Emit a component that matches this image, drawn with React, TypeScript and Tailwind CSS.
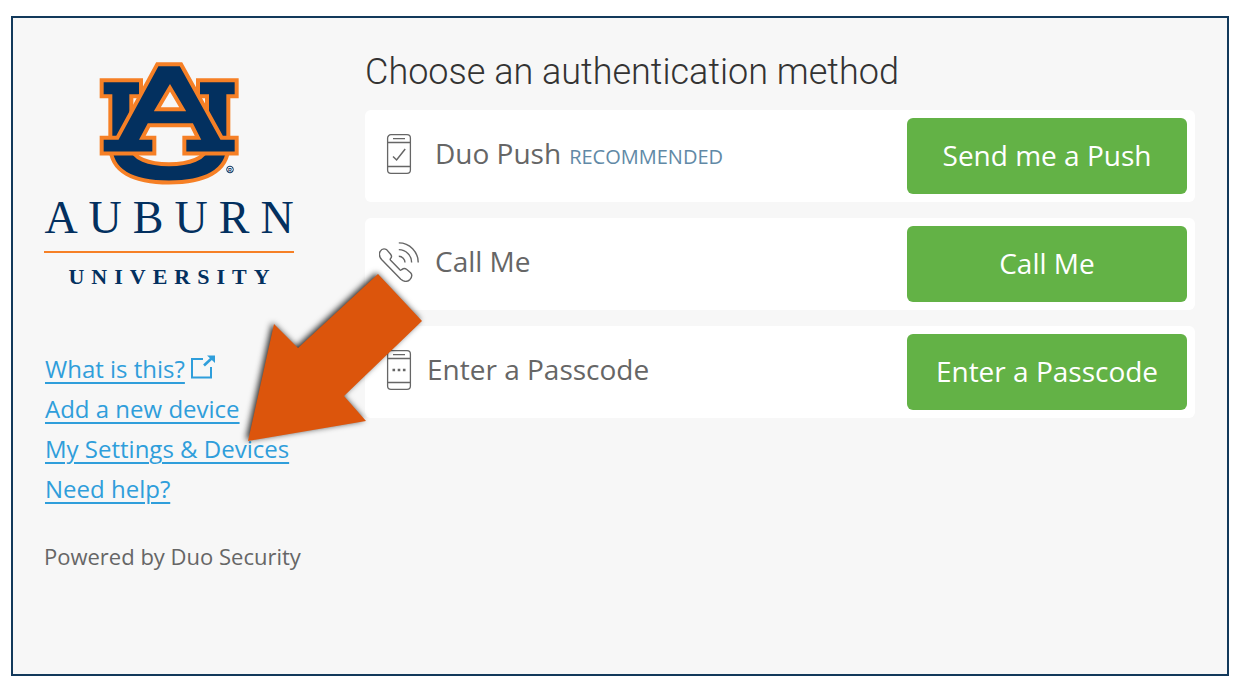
import type { ReactNode } from "react";

function AuburnMark() {
  return (
    <svg viewBox="27 20 420 368" className="h-[123px] w-[140px]" aria-hidden="true">
      <g fill="#03305f" stroke="#f68026" strokeWidth="12">
        <path d="M35 74H153V122H124V270C124 310 180 326 237 326S351 310 351 270V122H324V74H440V122H415V270C415 350 340 381 237 381S61 350 61 270V122H35Z" />
        <path
          fillRule="evenodd"
          d="M202 26H273L395 247H440V294H283V247H324L305 209H177L157 247H193V294H35V247H82ZM240 97L202 161H278Z"
        />
      </g>
      <circle cx="420" cy="342" r="10" fill="none" stroke="#03305f" strokeWidth="3" />
      <text
        x="420"
        y="348"
        textAnchor="middle"
        fill="#03305f"
        className="font-['Liberation_Sans'] text-[16px] font-bold"
      >
        R
      </text>
    </svg>
  );
}

function PhoneIcon({ children }: { children: ReactNode }) {
  return (
    <svg
      viewBox="0 0 40 40"
      className="size-10 shrink-0"
      fill="none"
      stroke="#666"
      strokeWidth="1.3"
      aria-hidden="true"
    >
      <rect x="8.6" y="0.7" width="22.8" height="38.6" rx="3.4" />
      <path d="M8.6 8.5H31.4M8.6 32.5H31.4M14 4.6H26" />
      {children}
    </svg>
  );
}

function CallIcon() {
  return (
    <svg
      viewBox="0 0 40 40"
      className="size-10 shrink-0"
      fill="none"
      stroke="#666"
      strokeWidth="1.4"
      strokeLinejoin="round"
      aria-hidden="true"
    >
      <path d="M1 9.6C2.6 7 5 6.2 7.6 7.6L11.6 12.2C13 14 12.6 15.4 11.6 16.4C11 17 11 17.6 11.6 18.3L20.6 27.6C21.4 28.5 22 28.4 22.8 27.6C24.3 26.4 26 26.2 27.5 27.3L31.6 30.8C33.6 33 32.8 35.3 31 37.4C28.4 40 25 39.8 21.8 37.3L2.8 17.8C0.2 14.9-0.2 12.3 1 9.6Z" />
      <path d="M19.8 14.3A6.2 6.2 0 0 1 26 20.6M19.8 7.6A12.8 12.8 0 0 1 32.6 20.6M19.8 0.9A19.4 19.4 0 0 1 39.2 20.6" />
    </svg>
  );
}

function ExternalIcon() {
  return (
    <svg
      viewBox="0 0 24 24"
      className="mb-1 size-6"
      fill="none"
      stroke="#2f9edb"
      strokeWidth="2"
      aria-hidden="true"
    >
      <path d="M12 4H1V22.5H20V12" />
      <path d="M13 10.5L21 3" strokeWidth="2.6" />
      <path d="M16 0.5H24V8Z" fill="#2f9edb" stroke="none" />
    </svg>
  );
}

type MethodProps = {
  icon: ReactNode;
  label: string;
  badge?: string;
  action: string;
  tight?: boolean;
};

function Method({ icon, label, badge, action, tight }: MethodProps) {
  return (
    <li className="flex items-center justify-between rounded-md bg-white p-2">
      <div
        className={
          tight ? "flex items-center gap-2 pb-1 pl-1.5" : "flex items-center gap-4 pb-1 pl-1.5"
        }
      >
        {icon}
        <h2 className="pb-0.5 text-[28px] leading-9">
          {label}
          {badge && <span className="ml-2 text-xl text-[#6189a6]">{badge}</span>}
        </h2>
      </div>
      <button
        type="button"
        className="h-[76px] w-[280px] shrink-0 rounded-md bg-[#63b246] pb-0.5 text-[28px] text-white"
      >
        {action}
      </button>
    </li>
  );
}

export default function App() {
  return (
    <div className="bg-white px-[11px] pt-4 pb-3 font-['Open_Sans',sans-serif] text-[#666]">
      <div className="relative flex min-h-[660px] items-start border-2 border-[#12395b] bg-[#f7f7f7] pr-8 pl-[31px]">
        <aside className="w-[321px] shrink-0 pt-11">
          <div className="flex w-[250px] flex-col items-center font-['Liberation_Serif',serif] text-[#03305f]">
            <AuburnMark />
            <span className="mt-2 -mr-[11px] text-[46px] leading-[50px] tracking-[11px]">AUBURN</span>
            <span className="mt-2 h-0.5 w-full bg-[#f68026]" />
            <span className="mt-3 -mr-[7px] text-[22px] leading-6 font-bold tracking-[7px]">
              UNIVERSITY
            </span>
          </div>

          <nav className="mt-[60px] flex flex-col items-start pl-px text-2xl leading-10 text-[#2f9edb]">
            <a href="#what" className="flex items-center gap-1.5">
              <span className="underline decoration-2 underline-offset-4">What is this?</span>
              <ExternalIcon />
            </a>
            <a href="#add" className="underline decoration-2 underline-offset-4">
              Add a new device
            </a>
            <a href="#settings" className="underline decoration-2 underline-offset-4">
              My Settings &amp; Devices
            </a>
            <a href="#help" className="underline decoration-2 underline-offset-4">
              Need help?
            </a>
          </nav>

          <p className="mt-8 text-[22px] leading-[30px]">Powered by Duo Security</p>
        </aside>

        <main className="flex-1 pt-8">
          <h1 className="pt-0.5 font-[Roboto,sans-serif] text-4xl leading-10 font-light text-[#333]">
            Choose an authentication method
          </h1>
          <ul className="mt-[18px] flex flex-col gap-4">
            <Method
              icon={
                <PhoneIcon>
                  <path d="M14 22.5L17.6 26L26.2 15" strokeWidth="1.5" />
                </PhoneIcon>
              }
              label="Duo Push"
              badge="RECOMMENDED"
              action="Send me a Push"
            />
            <Method icon={<CallIcon />} label="Call Me" action="Call Me" />
            <Method
              icon={
                <PhoneIcon>
                  <path d="M13.5 20H16.1M18.7 20H21.3M23.9 20H26.5" strokeWidth="2.6" />
                </PhoneIcon>
              }
              label="Enter a Passcode"
              action="Enter a Passcode"
              tight
            />
          </ul>
        </main>

        {/* callout pointing at the settings link */}
        <svg
          viewBox="0 0 200 190"
          className="pointer-events-none absolute top-[242px] left-[225px] h-[190px] w-[200px] drop-shadow-[-2px_-1px_3px_rgba(0,0,0,0.85)]"
          aria-hidden="true"
        >
          <path d="M10 181L36 64L60 88L140 14L184 61L106 136L128 161Z" fill="#dc550c" />
        </svg>
      </div>
    </div>
  );
}
